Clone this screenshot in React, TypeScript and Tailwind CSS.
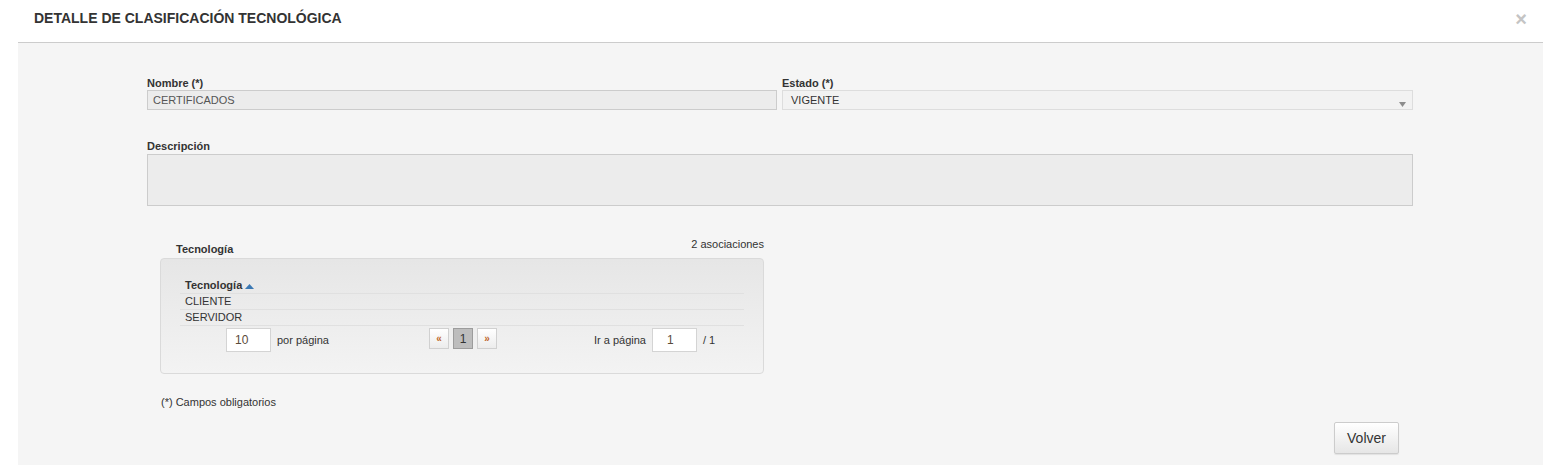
export default function App() {
  const font = { fontFamily: '"Liberation Sans", Arial, sans-serif' };

  return (
    <div className="min-h-[476px] bg-white px-[18px] text-[#333]" style={font}>
      {/* Header */}
      <div className="relative flex h-[43px] items-center border-b border-[#cccccc] pl-[16px]">
        <h4 className="-mt-[7px] text-[14px] font-bold leading-[16px] text-[#333]">
          DETALLE DE CLASIFICACIÓN TECNOLÓGICA
        </h4>
        <span className="absolute right-[16px] top-[9px] text-[20px] font-bold leading-[20px] text-[#c4c4c4]">
          ×
        </span>
      </div>

      {/* Body */}
      <div className="h-[422px] bg-[#f5f5f5] pt-[34px]">
        <div className="ml-[129px] w-[1266px]">
          <div className="flex gap-[5px]">
            <div className="w-[630px]">
              <label className="block text-[11px] font-bold leading-[13px]">Nombre (*)</label>
              <div className="flex h-[20px] items-center border border-[#cccccc] bg-[#ececec] pl-[5px] text-[11px] text-[#555]">
                CERTIFICADOS
              </div>
            </div>
            <div className="w-[631px]">
              <label className="block text-[11px] font-bold leading-[13px]">Estado (*)</label>
              <div className="relative flex h-[20px] items-center border border-[#dddddd] bg-[#f2f2f2] pl-[8px] text-[11px] text-[#333]">
                VIGENTE
                <svg className="absolute right-[6px] top-[11px]" width="7" height="5" viewBox="0 0 7 5">
                  <path d="M0 0h7L3.5 5z" fill="#8c8c8c" />
                </svg>
              </div>
            </div>
          </div>

          <div className="mt-[30px]">
            <label className="mb-[1px] block text-[11px] font-bold leading-[13px]">Descripción</label>
            <div className="h-[52px] border border-[#cccccc] bg-[#ececec]" />
          </div>

          {/* Tecnología */}
          <div className="ml-[13px] mt-[32px] w-[604px]">
            <div className="mb-[2px] flex items-start justify-between">
              <span className="ml-[16px] mt-[5px] text-[11px] font-bold leading-[13px]">Tecnología</span>
              <span className="text-[11px] leading-[13px]">2 asociaciones</span>
            </div>
            <div className="rounded-[4px] border border-[#dadada] bg-gradient-to-b from-[#e6e6e6] to-[#f3f3f3] px-[19px] pb-[21px] pt-[19px]">
              <div className="text-[11px] leading-[15px]">
                <div className="flex items-center border-b border-[#e0e0e0] pl-[5px] font-bold">
                  Tecnología
                  <svg className="ml-[3px] mt-[1px]" width="9" height="5" viewBox="0 0 9 5">
                    <path d="M0 5L4.5 0 9 5z" fill="#3c79b4" />
                  </svg>
                </div>
                <div className="border-b border-[#e0e0e0] pl-[5px]">CLIENTE</div>
                <div className="border-b border-[#e0e0e0] pl-[5px]">SERVIDOR</div>
              </div>

              <div className="mt-[2px] flex items-center text-[11px]">
                <div className="flex w-[249px] items-center pl-[46px]">
                  <div className="flex h-[24px] w-[45px] items-center border border-[#d4d4d4] bg-white pl-[8px] text-[12px] text-[#5a4a3a]">
                    10
                  </div>
                  <span className="ml-[6px]">por página</span>
                </div>
                <div className="flex w-[165px] items-start gap-[4px] self-start">
                  <span className="flex h-[21px] w-[20px] items-center justify-center border border-[#d0d0d0] bg-gradient-to-b from-white to-[#ececec] text-[10px] font-bold text-[#c0652a]">
                    «
                  </span>
                  <span className="flex h-[21px] w-[20px] items-center justify-center border border-[#9c9c9c] bg-[#bdbdbd] text-[12px] text-[#333]">
                    1
                  </span>
                  <span className="flex h-[21px] w-[20px] items-center justify-center border border-[#d0d0d0] bg-gradient-to-b from-white to-[#ececec] text-[10px] font-bold text-[#c0652a]">
                    »
                  </span>
                </div>
                <div className="flex items-center">
                  <span>Ir a página</span>
                  <div className="ml-[6px] flex h-[24px] w-[45px] items-center border border-[#d4d4d4] bg-white pl-[14px] text-[12px] text-[#5a4a3a]">
                    1
                  </div>
                  <span className="ml-[6px]">/ 1</span>
                </div>
              </div>
            </div>
          </div>

          <p className="ml-[14px] mt-[22px] text-[11px] leading-[13px]">(*) Campos obligatorios</p>

          <div className="mr-[14px] mt-[13px] flex justify-end">
            <button className="h-[32px] w-[65px] rounded-[2px] border border-[#cccccc] bg-gradient-to-b from-white to-[#e6e6e6] text-[14px] text-[#333] shadow-[0_1px_1px_rgba(0,0,0,0.08)]">
              Volver
            </button>
          </div>
        </div>
      </div>
    </div>
  );
}
